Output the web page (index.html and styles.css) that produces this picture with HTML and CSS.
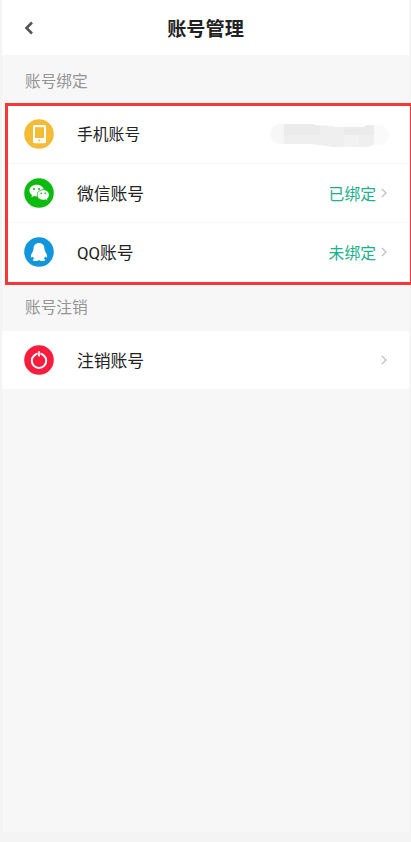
FILE: index.html
```html
<!DOCTYPE html>
<html lang="zh-CN">
<head>
<meta charset="utf-8">
<title>账号管理</title>
<link rel="stylesheet" href="styles.css">
</head>
<body>
<main class="screen">
  <header class="header">
    <svg class="back" viewBox="0 0 10 14"><path d="M8 1.500 2.500 7 8 12.500"/></svg>
    <h1 class="title">账号管理</h1>
  </header>
  <h2 class="section first">账号绑定</h2>
  <section class="group">
    <div class="row">
      <svg class="icon" viewBox="0 0 30 30"><circle cx="15" cy="15" r="14.8" fill="#f4bb37"/><rect x="9" y="6" width="13" height="18.3" rx="1.5" fill="#fff"/><rect x="11" y="8.2" width="9" height="10.8" fill="#f4bb37"/><circle cx="15.4" cy="21.6" r="1" fill="#f4bb37"/></svg>
      <span class="label small">手机账号</span>
      <svg class="mask" viewBox="0 0 120 24"><path d="M15 0H11A10 10 0 0 0 11 20H15Z" fill="#f7f7f7"/><path d="M15 0H45V1L65 2V3H95L98 1H105V21L99 23H61L60 22L46 21L43 20H15Z" fill="#efefef"/><path d="M15 0H45V1L51 2V11H15ZM75 3H95L98 1H105V11H75Z" fill="#ebebeb"/><path d="M75 11H90V23H75Z" fill="#f2f2f2"/><path d="M105 1H110A10 10 0 0 1 110 21H105Z" fill="#fafafa"/></svg>
    </div>
    <div class="row">
      <svg class="icon" viewBox="0 0 30 30"><circle cx="15" cy="15" r="14.8" fill="#0cba10"/><path fill="#fff" d="M12.5 6.7C8.500 6.700 5.400 9.200 5.400 12.500c0 1.900 1 3.500 2.700 4.600l-.8 2.200 2.800-1.300c1.100.4 2.300.5 3.500.3-1-3.700 2-6.900 6.200-6.900C19.200 8.700 16.200 6.700 12.500 6.700Z"/><path fill="#fff" stroke="#0cba10" stroke-width=".7" d="M19.200 11.700c-3.400 0-6 2.300-6 5.200s2.600 5.200 6 5.200c.8 0 1.600-.1 2.300-.4l2.200 1.300-.6-2.100c1.300-1 2.200-2.400 2.200-4 0-2.900-2.700-5.200-6.100-5.200Z"/><g fill="#0cba10"><circle cx="10" cy="11" r="1"/><circle cx="15" cy="11" r="1"/><circle cx="17.200" cy="15.400" r=".8"/><circle cx="21.200" cy="15.400" r=".8"/></g></svg>
      <span class="label">微信账号</span>
      <span class="status">已绑定</span>
      <svg class="chevron" viewBox="0 0 6 10"><path d="m.8.8 4.200 4.200L.8 9.200"/></svg>
    </div>
    <div class="row">
      <svg class="icon" viewBox="0 0 30 30"><circle cx="15" cy="15" r="14.8" fill="#1296db"/><path fill="#fff" d="M15 6c-3.500 0-5.600 2.500-5.400 6.100-.2 1.200-.9 1.700-.8 2.700-1.500 1.900-2.400 4.200-1.700 5.500.4.500 1.200-.1 1.700-.9.300 1 .8 1.800 1.500 2.400-1 .4-1.600.8-1.400 1.400.5 1.100 4.700.9 6.100-.3 1.400 1.200 5.600 1.400 6.100.3.200-.6-.4-1-1.400-1.400.7-.6 1.200-1.400 1.500-2.400.5.800 1.300 1.400 1.700.9.700-1.300-.2-3.600-1.700-5.500.1-1-.6-1.500-.8-2.700C20.600 8.500 18.500 6 15 6Z"/></svg>
      <span class="label">QQ账号</span>
      <span class="status">未绑定</span>
      <svg class="chevron" viewBox="0 0 6 10"><path d="m.8.8 4.200 4.200L.8 9.200"/></svg>
    </div>
    <div class="highlight"></div>
  </section>
  <h2 class="section">账号注销</h2>
  <div class="row last">
    <svg class="icon" viewBox="0 0 30 30"><circle cx="15" cy="15" r="14.800" fill="#f61d3d"/><circle cx="15" cy="15.800" r="7.200" fill="none" stroke="#fff" stroke-width="2"/><path d="M15 6.500v4.500" stroke="#f61d3d" stroke-width="2.800"/><path d="M15 6.300v5.300" stroke="#fff" stroke-width="1.700"/></svg>
    <span class="label">注销账号</span>
    <svg class="chevron" viewBox="0 0 6 10"><path d="m.8.8 4.200 4.200L.8 9.200"/></svg>
  </div>
</main>
</body>
</html>
```
FILE: styles.css
```css
* { box-sizing: border-box; }
body {
  margin: 0;
  height: 842px;
  padding: 0 2px;
  overflow: hidden;
  background: #f4f4f4;
  color: #222;
  font-family: Roboto, "Noto Sans CJK SC", sans-serif;
}
.screen { height: 832px; background: #f7f7f7; }
.header {
  display: grid;
  grid-template-columns: 52px 1fr 52px;
  align-items: center;
  height: 55px;
  background: #fff;
}
.back { width: 10px; height: 14px; margin-left: 22px; fill: none; stroke: #555; stroke-width: 2.6; }
.title { margin: 4px 0 0; text-align: center; font-size: 19.200px; line-height: 28px; font-weight: 700; }
.section {
  display: flex;
  align-items: center;
  height: 49px;
  margin: 0;
  padding: 0 0 0 23px;
  color: #949494;
  font-size: 15.700px;
  font-weight: 400;
}
.first { height: 50px; }
.group { position: relative; }
.row {
  display: flex;
  align-items: center;
  height: 59px;
  padding: 0 22px;
  background: #fff;
  border-bottom: 1px solid #f7f7f7;
}
.icon { width: 30px; height: 30px; flex: none; }
.label { margin: 2px 0 0 23px; font-size: 16.800px; line-height: 24px; }
.small { font-size: 15.800px; }
.mask { width: 120px; height: 24px; margin: 3px -2px 0 auto; }
.status { margin: 3px 0 0 auto; color: #20b08b; font-size: 15.800px; line-height: 24px; }
.chevron { width: 6px; height: 10px; margin-left: 5px; fill: none; stroke: #bbb; stroke-width: 1.200; }
.label + .chevron { margin-left: auto; }
.highlight {
  position: absolute;
  top: -2px;
  left: 3px;
  width: 408px;
  height: 182px;
  border: 3px solid #fa3737;
}
.last { height: 58px; border-bottom: 0; }
```
